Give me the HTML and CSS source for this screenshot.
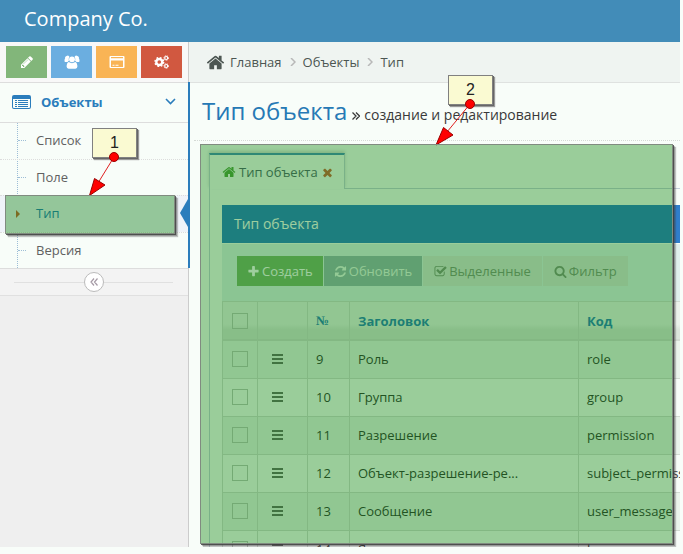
FILE: index.html
```html
<!DOCTYPE html>
<html lang="ru">
<head>
<meta charset="utf-8">
<title>Тип объекта</title>
<link rel="stylesheet" href="styles.css">
</head>
<body>
<svg class="sprite" aria-hidden="true">
  <symbol id="home" viewBox="0 0 1792 1792"><path d="M1472 992v480q0 26-19 45t-45 19h-384v-384h-256v384h-384q-26 0-45-19t-19-45v-480q0-1 .5-3t.5-3l575-474 575 474q1 2 1 6zm223-69l-62 74q-8 9-21 11h-3q-13 0-21-7l-692-577-692 577q-12 8-24 7-13-2-21-11l-62-74q-8-10-7-23.500t11-21.500l719-599q32-26 76-26t76 26l244 204v-195q0-14 9-23t23-9h192q14 0 23 9t9 23v408l219 182q10 8 11 21.500t-7 23.500z"/></symbol>
  <symbol id="pencil" viewBox="0 0 1792 1792"><path d="M491 1536l91-91-235-235-91 91v107h128v128h107zm523-928q0-22-22-22-10 0-17 7l-542 542q-7 7-7 17 0 22 22 22 10 0 17-7l542-542q7-7 7-17zm-54-192l416 416-832 832h-416v-416zm683 96q0 53-37 90l-166 166-416-416 166-165q36-38 90-38 53 0 91 38l235 234q37 39 37 91z"/></symbol>
  <symbol id="times" viewBox="0 0 1792 1792"><path d="M1490 1322q0 40-28 68l-136 136q-28 28-68 28t-68-28l-294-294-294 294q-28 28-68 28t-68-28l-136-136q-28-28-28-68t28-68l294-294-294-294q-28-28-28-68t28-68l136-136q28-28 68-28t68 28l294 294 294-294q28-28 68-28t68 28l136 136q28 28 28 68t-28 68l-294 294 294 294q28 28 28 68z"/></symbol>
  <symbol id="plus" viewBox="0 0 1792 1792"><path d="M1600 736v192q0 40-28 68t-68 28h-416v416q0 40-28 68t-68 28h-192q-40 0-68-28t-28-68v-416h-416q-40 0-68-28t-28-68v-192q0-40 28-68t68-28h416v-416q0-40 28-68t68-28h192q40 0 68 28t28 68v416h416q40 0 68 28t28 68z"/></symbol>
  <symbol id="refresh" viewBox="0 0 1792 1792"><path d="M1639 1056q0 5-1 7-64 268-268 434.500t-478 166.500q-146 0-282.500-55t-243.500-157l-129 129q-19 19-45 19t-45-19-19-45v-448q0-26 19-45t45-19h448q26 0 45 19t19 45-19 45l-137 137q71 66 161 102t187 36q134 0 250-65t186-179q11-17 53-117 8-23 30-23h192q13 0 22.500 9.500t9.500 22.500zm25-800v448q0 26-19 45t-45 19h-448q-26 0-45-19t-19-45 19-45l138-138q-148-137-349-137-134 0-250 65t-186 179q-11 17-53 117-8 23-30 23h-199q-13 0-22.500-9.500t-9.500-22.500v-7q65-268 270-434.500t480-166.500q146 0 284 55.500t245 156.500l130-129q19-19 45-19t45 19 19 45z"/></symbol>
  <symbol id="check" viewBox="0 0 1792 1792"><path d="M1472 930v318q0 119-84.500 203.500t-203.500 84.500h-832q-119 0-203.500-84.500t-84.500-203.500v-832q0-119 84.500-203.500t203.500-84.500h832q63 0 117 25 15 7 18 23 3 17-9 29l-49 49q-10 10-23 10-3 0-9-2-23-6-45-6h-832q-66 0-113 47t-47 113v832q0 66 47 113t113 47h832q66 0 113-47t47-113v-254q0-13 9-22l64-64q10-10 23-10 6 0 12 3 20 8 20 29zm231-489l-814 814q-24 24-57 24t-57-24l-430-430q-24-24-24-57t24-57l110-110q24-24 57-24t57 24l263 263 647-647q24-24 57-24t57 24l110 110q24 24 24 57t-24 57z"/></symbol>
  <symbol id="search" viewBox="0 0 1792 1792"><path d="M1216 832q0-185-131.500-316.500t-316.500-131.500-316.500 131.500-131.500 316.500 131.500 316.500 316.500 131.500 316.500-131.500 131.500-316.500zm512 832q0 52-38 90t-90 38q-54 0-90-38l-343-342q-179 124-399 124-143 0-273.500-55.500t-225-150-150-225-55.500-273.500 55.500-273.500 150-225 225-150 273.500-55.500 273.500 55.500 225 150 150 225 55.500 273.500q0 220-124 399l343 343q37 37 37 90z"/></symbol>
  <symbol id="users" viewBox="0 0 16 14"><path d="M2.500 1a2 2 0 0 1 3 1 3.500 3.500 0 0 0-.5 3.500L3.500 7H1.200Q.4 7 .5 5.500.6 3.500 1.200 3.600A2 2 0 0 1 2.500 1zM13.500 1a2 2 0 0 0-3 1 3.500 3.500 0 0 1 .5 3.500L12.500 7h2.300q.8 0 .7-1.500-.1-2-.7-1.900A2 2 0 0 0 13.500 1z"/><circle cx="8" cy="4.300" r="2.900"/><path d="M4.800 7Q8 9.300 11.200 7q2.200.8 2.200 4.600 0 2.100-2 2.100H4.600q-2 0-2-2.100 0-3.800 2.200-4.600z"/></symbol>
  <symbol id="card" viewBox="0 0 16 14"><path fill-rule="evenodd" d="M1.500 1h13q1 0 1 1v10q0 1-1 1h-13q-1 0-1-1V2q0-1 1-1zM2 2v1.200h12V2zm0 3.500V12h12V5.500zM3.500 9.700h2v1h-2zm3 0h3v1h-3z"/></symbol>
  <symbol id="gears" viewBox="0 0 16 14"><g fill="none" stroke="currentColor"><circle cx="5.300" cy="7" r="3" stroke-width="2.400"/><circle cx="5.300" cy="7" r="4.400" stroke-width="1.400" stroke-dasharray="1.730 1.730"/><circle cx="12.200" cy="3" r="1.500" stroke-width="1.200"/><circle cx="12.200" cy="3" r="2.300" stroke-width="1" stroke-dasharray="1.030 1.030"/><circle cx="12.200" cy="11" r="1.500" stroke-width="1.200"/><circle cx="12.200" cy="11" r="2.300" stroke-width="1" stroke-dasharray="1.030 1.030"/></g></symbol>
  <symbol id="list" viewBox="0 0 19 14"><path fill-rule="evenodd" d="M2 0h15q2 0 2 2v10q0 2-2 2H2q-2 0-2-2V2q0-2 2-2zM1 4v8q0 1 1 1h15q1 0 1-1V4zM3 5h2v1H3zm3 0h10v1H6zM3 7h2v1H3zm3 0h10v1H6zM3 9h2v1H3zm3 0h10v1H6zM3 11h2v1H3zm3 0h10v1H6z"/></symbol>
  <symbol id="bars" viewBox="0 0 11 10"><path d="M0 0h11v2H0zM0 4h11v2H0zM0 8h11v2H0z"/></symbol>
  <symbol id="next" viewBox="0 0 6 8"><path d="M1 0l4 4-4 4" fill="none" stroke="currentColor" stroke-width="1.500"/></symbol>
  <symbol id="double" viewBox="0 0 8 8"><path d="M.5 .5L4 4 .5 7.500M4 .5L7.500 4 4 7.500" fill="none" stroke="currentColor" stroke-width="1.300"/></symbol>
  <symbol id="down" viewBox="0 0 11 7"><path d="M1 1l4.500 4.500L10 1" fill="none" stroke="currentColor" stroke-width="1.600"/></symbol>
  <symbol id="collapse" viewBox="0 0 8 8"><path d="M4 .5L1 4l3 3.500M7.500 .5l-3 3.500 3 3.500" fill="none" stroke="currentColor" stroke-width="1.200"/></symbol>
</svg>

<div class="app">
  <header class="navbar"><a class="brand" href="#">Company Co.</a></header>
  <div class="body">
    <aside class="sidebar">
      <div class="shortcuts">
        <button class="shortcut green" aria-label="Правка"><svg class="i14"><use href="#pencil"/></svg></button>
        <button class="shortcut blue" aria-label="Пользователи"><svg class="i16"><use href="#users"/></svg></button>
        <button class="shortcut orange" aria-label="Карта"><svg class="i16"><use href="#card"/></svg></button>
        <button class="shortcut red" aria-label="Настройки"><svg class="i16"><use href="#gears"/></svg></button>
      </div>
      <nav class="menu">
        <a class="group" href="#"><svg class="list-icon"><use href="#list"/></svg><span>Объекты</span><svg class="down-icon"><use href="#down"/></svg></a>
        <ul class="submenu">
          <li><a href="#">Список</a></li>
          <li><a href="#">Поле</a></li>
          <li class="active"><a href="#">Тип</a><div class="highlight item-highlight"></div></li>
          <li><a href="#">Версия</a></li>
        </ul>
      </nav>
      <div class="collapse"><button aria-label="Свернуть"><svg><use href="#collapse"/></svg></button></div>
    </aside>

    <main class="main">
      <nav class="breadcrumbs">
        <svg class="home-icon"><use href="#home"/></svg><a href="#">Главная</a>
        <svg class="next-icon"><use href="#next"/></svg><a href="#">Объекты</a>
        <svg class="next-icon"><use href="#next"/></svg><span>Тип</span>
      </nav>
      <div class="page">
        <div class="heading"><h1>Тип объекта</h1><span><svg class="double-icon"><use href="#double"/></svg>создание и редактирование</span></div>
        <div class="workspace">
          <div class="tabs">
            <a class="tab" href="#"><svg class="i14"><use href="#home"/></svg>Тип объекта<svg class="i12"><use href="#times"/></svg></a>
          </div>
          <section class="tab-content">
            <h2>Тип объекта</h2>
            <div class="toolbar">
              <button class="create"><svg class="i12"><use href="#plus"/></svg>Создать</button>
              <button class="update"><svg class="i12"><use href="#refresh"/></svg>Обновить</button>
              <button><svg class="i12"><use href="#check"/></svg>Выделенные</button>
              <button><svg class="i12"><use href="#search"/></svg>Фильтр</button>
            </div>
            <table>
              <colgroup><col class="c-check"><col class="c-menu"><col class="c-num"><col class="c-title"><col></colgroup>
              <thead><tr><th><input type="checkbox" aria-label="Выбрать все"></th><th></th><th class="num">№</th><th>Заголовок</th><th>Код</th></tr></thead>
              <tbody>
                <tr><td><input type="checkbox" aria-label="9"></td><td><svg class="bars"><use href="#bars"/></svg></td><td>9</td><td>Роль</td><td>role</td></tr>
                <tr><td><input type="checkbox" aria-label="10"></td><td><svg class="bars"><use href="#bars"/></svg></td><td>10</td><td>Группа</td><td>group</td></tr>
                <tr><td><input type="checkbox" aria-label="11"></td><td><svg class="bars"><use href="#bars"/></svg></td><td>11</td><td>Разрешение</td><td>permission</td></tr>
                <tr><td><input type="checkbox" aria-label="12"></td><td><svg class="bars"><use href="#bars"/></svg></td><td>12</td><td>Объект-разрешение-ре...</td><td>subject_permission</td></tr>
                <tr><td><input type="checkbox" aria-label="13"></td><td><svg class="bars"><use href="#bars"/></svg></td><td>13</td><td>Сообщение</td><td>user_message</td></tr>
                <tr><td><input type="checkbox" aria-label="14"></td><td><svg class="bars"><use href="#bars"/></svg></td><td>14</td><td>Язык</td><td>language</td></tr>
              </tbody>
            </table>
          </section>
          <div class="highlight area-highlight"></div>
        </div>
      </div>
    </main>
  </div>
</div>

<div class="callout callout-one">1</div>
<div class="callout callout-two">2</div>
<svg class="arrows" aria-hidden="true">
  <path class="line" d="M114 157L98 183M470 104L447 132"/>
  <path class="head" d="M89.500 195.500L94.500 178.500L105 185zM436 145L443.500 127.500L453 135z"/>
  <circle class="head" cx="114" cy="157" r="4.500"/><circle class="head" cx="470" cy="104" r="4.500"/>
</svg>
</body>
</html>
```
FILE: styles.css
```css
* { box-sizing: border-box; }

body {
  margin: 0;
  position: relative;
  height: 100vh;
  overflow: hidden;
  background: #f8fdf9;
  color: #393939;
  font: 13px/20px "Open Sans", sans-serif;
}

a { color: inherit; text-decoration: none; }
button { font: inherit; border: 0; padding: 0; color: inherit; }
svg { fill: currentColor; flex: none; }
.sprite { display: none; }
.i12 { width: 13px; height: 13px; }
.i14 { width: 14px; height: 14px; }
.i16 { width: 16px; height: 14px; }

.app {
  display: flex;
  flex-direction: column;
  height: calc(100vh - 7px);
  margin-right: 3px;
  overflow: hidden;
}

.navbar {
  display: flex;
  flex: none;
  align-items: center;
  height: 42px;
  padding: 0 24px 4px;
  background: #428cb8;
  color: #fff;
}
.brand { font-size: 20px; }

.body { display: flex; flex: 1; min-height: 0; }

/* Sidebar */
.sidebar {
  flex: none;
  width: 189px;
  background: #efefef;
  border-right: 1px solid #ccc;
}
.shortcuts {
  display: flex;
  gap: 4px;
  height: 41px;
  padding: 4px 6px;
  background: #f8f8f8;
  border-bottom: 1px solid #ddd;
}
.shortcut {
  display: grid;
  place-items: center;
  width: 41px;
  height: 32px;
  color: #fff;
}
.green { background: #82b67a; }
.blue { background: #6baee0; }
.orange { background: #f9b455; }
.red { background: #d15840; }

.menu {
  position: relative;
  background: #f8fdf9;
  border-bottom: 1px solid #ddd;
}
.menu::after {
  content: "";
  position: absolute;
  top: -1px;
  bottom: 0;
  right: -2px;
  width: 2px;
  background: #2b7dbc;
}
.group {
  display: flex;
  align-items: center;
  height: 40px;
  padding: 0 12px 2px;
  border-bottom: 1px solid #ddd;
  color: #2b7dbc;
  font-weight: 700;
}
.group span { flex: 1; margin-left: 10px; }
.list-icon { width: 19px; height: 14px; }
.down-icon { width: 11px; height: 7px; }

.submenu {
  position: relative;
  margin: 0;
  padding: 0;
  list-style: none;
}
.submenu::before {
  content: "";
  position: absolute;
  top: 0;
  bottom: 0;
  left: 17px;
  border-left: 1px dotted #9dbdd6;
}
.submenu li { position: relative; height: 36px; border-top: 1px dotted #ddd; }
.submenu li:first-child { border-top: 0; }
.submenu li::before {
  content: "";
  position: absolute;
  top: 17px;
  left: 18px;
  width: 8px;
  border-top: 1px dotted #9dbdd6;
}
.submenu a { display: block; padding: 7px 36px; color: #616161; }
.submenu .active { height: 37px; background: #eff3f9; }
.submenu .active a { color: #2b7dbc; }
.submenu .active::before {
  top: 14px;
  left: 16px;
  width: 0;
  border: 4px solid transparent;
  border-left-color: #c86139;
  border-right: 0;
}
.submenu .active::after {
  content: "";
  position: absolute;
  top: 3px;
  right: 0;
  border: 14px solid transparent;
  border-right: 8px solid #2b7dbc;
  border-left: 0;
}

.collapse {
  display: grid;
  place-items: center;
  height: 27px;
  background: linear-gradient(#e0e0e0, #e0e0e0) 14px 13px / 159px 1px no-repeat #f3f3f3;
  border-bottom: 1px solid #e0e0e0;
}
.collapse button {
  display: grid;
  place-items: center;
  width: 20px;
  height: 20px;
  border: 1px solid #bbb;
  border-radius: 50%;
  background: #fff;
  color: #a59aa5;
}
.collapse svg { width: 8px; height: 8px; }

/* Content */
.main { flex: 1; min-width: 0; }
.breadcrumbs {
  display: flex;
  align-items: center;
  height: 41px;
  padding-left: 17px;
  background: #eff4f1;
  border-bottom: 1px solid #dfe2e0;
  color: #4c5652;
}
.home-icon { width: 19px; height: 19px; margin-right: 5px; }
.next-icon { width: 6px; height: 8px; margin: 0 7px 0 8px; color: #b8b8b8; }

.page { padding-left: 5px; }
.heading {
  display: flex;
  align-items: baseline;
  gap: 5px;
  height: 58px;
  padding: 10px 8px;
  border-bottom: 1px dotted #d5dad6;
  font-size: 14px;
}
.heading h1 {
  margin: 0;
  color: #2679b5;
  font-size: 24px;
  font-weight: 400;
  line-height: 36px;
}
.double-icon { width: 8px; height: 8px; margin-right: 4px; }

.workspace {
  position: relative;
  padding: 12px 0 0 15px;
}
.tabs { display: flex; }
.tab {
  display: flex;
  align-items: center;
  gap: 3px;
  position: relative;
  z-index: 1;
  height: 36px;
  margin-bottom: -1px;
  padding: 0 10px 0 12px;
  border: 1px solid #c5d0dc;
  border-top: 2px solid #4c8fbd;
  border-bottom: 0;
  background: #f8fdf9;
  box-shadow: 0 -2px 3px rgba(0, 0, 0, 0.15);
  color: #576373;
}
.tab .i14 { color: #59a548; }
.tab .i12 { color: #ce6240; }

.tab-content {
  padding: 16px 0 0 12px;
  border: 1px solid #c5d0dc;
  border-width: 1px 0 0 1px;
}
.tab-content h2 {
  margin: 0 0 1px;
  padding: 0 12px;
  background: #307ecc;
  color: #fff;
  font-size: 14px;
  font-weight: 400;
  line-height: 38px;
}
.toolbar {
  display: flex;
  gap: 1px;
  padding: 12px 15px 15px;
  background: #e0f0ee;
}
.toolbar button {
  display: flex;
  align-items: center;
  gap: 2px;
  height: 30px;
  padding: 0 11px;
  background: #dde4dd;
  color: #849381;
}
.toolbar .create { padding: 0 10px; background: #80b573; color: #fff; }
.toolbar .update { padding: 0 10px; background: #9bb5b6; color: #eef8f0; }

table { width: 100%; table-layout: fixed; border-spacing: 0; }
.c-check { width: 35px; }
.c-menu { width: 50px; }
.c-num { width: 42px; }
.c-title { width: 229px; }
th, td {
  height: 38px;
  padding: 0 8px;
  border: 0 solid #d3dbd3;
  border-width: 0 0 1px 1px;
  text-align: left;
  white-space: nowrap;
}
td { padding-bottom: 2px; }
th {
  height: 40px;
  border-width: 1px 0 2px 1px;
  color: #307ebc;
  background: linear-gradient(#ecf2ec 60%, #dce5dc 75%);
}
.num { font-family: "Liberation Serif", serif; }
tbody tr:nth-child(odd) { background: #ebf4ec; }
input[type="checkbox"] {
  display: block;
  appearance: none;
  width: 16px;
  height: 16px;
  margin: 0 0 0 1px;
  border: 1px solid #bcc6bc;
}
.bars { display: block; width: 11px; height: 10px; margin-left: 6px; color: #6a6d6a; }

/* Annotations laid over the interface */
.highlight {
  position: absolute;
  border: 1px solid #808b80;
  background: rgba(0, 125, 0, 0.38);
  box-shadow: 1px 1px 0 rgba(60, 60, 60, 0.8), 2px 2px 0 rgba(60, 60, 60, 0.3), 3px 3px 1px rgba(60, 60, 60, 0.3);
}
.item-highlight { top: -1px; left: 5px; right: 13px; height: 39px; z-index: 2; }
.area-highlight { top: 3px; left: 6px; right: 7px; height: 400px; z-index: 2; }
.callout {
  position: absolute;
  width: 45px;
  height: 30px;
  border: 1px solid #808080;
  background: #fafad2;
  box-shadow: 1px 1px 0 #666, 2px 2px 1px #999;
  color: #222;
  font: 16px/28px "Liberation Sans", sans-serif;
  text-align: center;
}
.callout-one { left: 92px; top: 128px; }
.callout-two { left: 448px; top: 75px; }
.arrows { position: absolute; inset: 0; width: 100%; height: 100%; }
.arrows .line { stroke: #e02020; }
.arrows .head { fill: #f00; stroke: #900; }
```
